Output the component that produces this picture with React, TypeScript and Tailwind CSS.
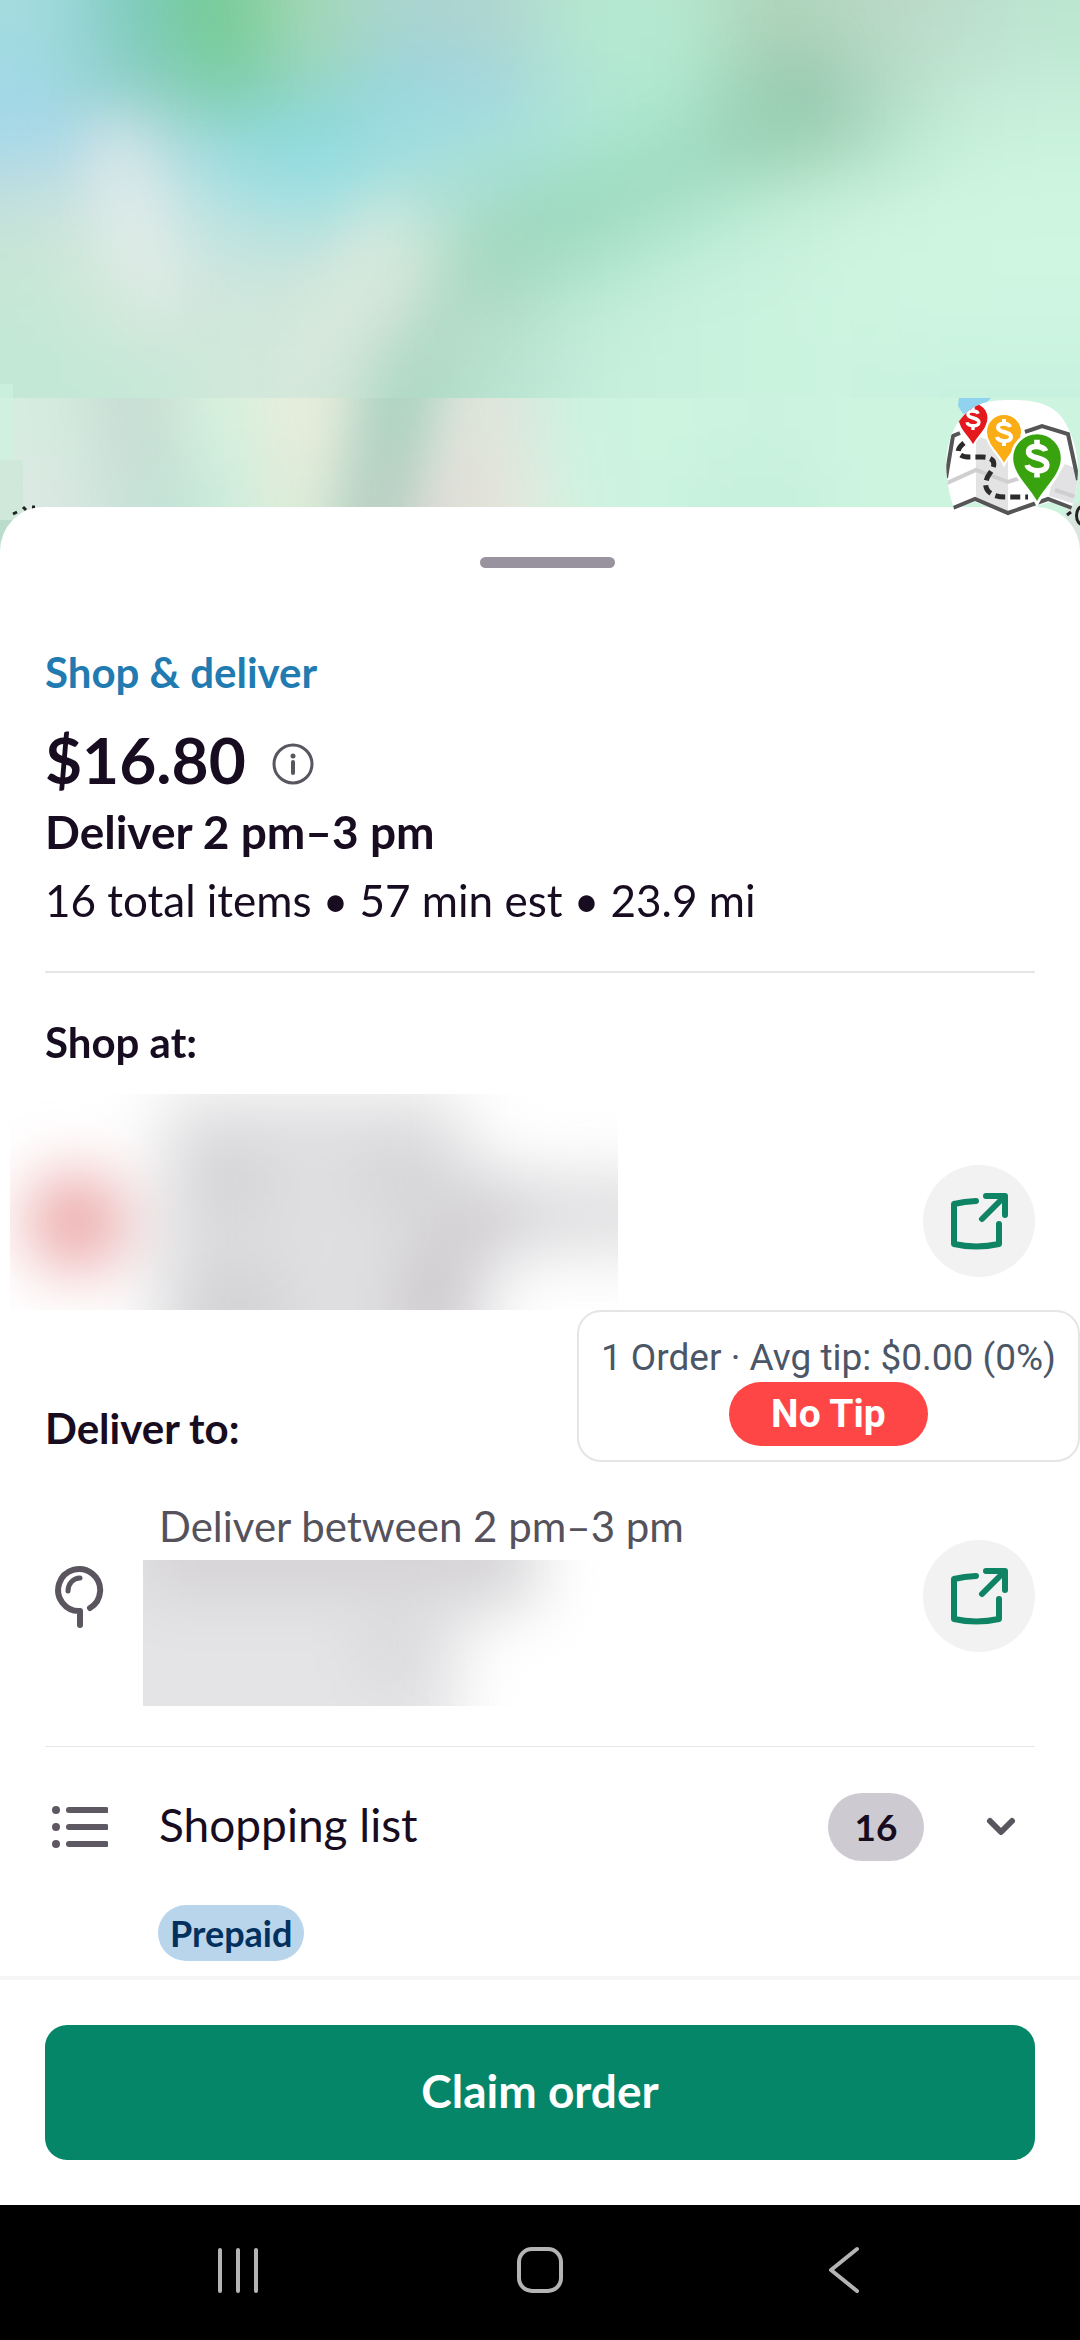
import { useState } from "react";

// Coarse colour samples of the map tiles, softened by a gaussian filter
const upperTiles = [
  ["#a4dbe0", "#7ccabb", "#7ccd98", "#a6d8b8", "#a9d4d2", "#b0d4cf", "#b5e8d0", "#b6e9d0", "#add4ba", "#b7d7c2", "#bddccb", "#bce6d0"],
  ["#a0d8e6", "#8dcfc4", "#7cceae", "#96d6c4", "#98d6e2", "#a2d6de", "#b2e6d5", "#b0ead0", "#9dcdb2", "#a8d2bc", "#c0e7d2", "#c4ecd8"],
  ["#a8d8ea", "#c6dfe8", "#95d9da", "#8adae4", "#a0dde0", "#a8e0dc", "#ace6d2", "#a6e2c8", "#98ceb0", "#a8d9be", "#c6f0da", "#caf3dd"],
  ["#c5e0dc", "#dfebea", "#aee0e2", "#a0e0e2", "#b4e3da", "#a6decc", "#9fdcc3", "#a6e2c8", "#bcead2", "#caf1dc", "#cdf4df", "#cdf5df"],
  ["#c8e6d6", "#deece4", "#c8e4de", "#c8e4dc", "#daeade", "#a4d8c0", "#a8e0c8", "#bfecd6", "#c8f1dc", "#cdf4df", "#cff6e0", "#cff6e0"],
  ["#c5e8d6", "#d4e9dc", "#d0e6dc", "#d2e8dc", "#d2e4d6", "#b0dac6", "#c0ecd8", "#c8f1dd", "#caf3de", "#ccf4df", "#cef5e0", "#cef5e1"],
  ["#c3e8d6", "#c6e8d8", "#cfe8da", "#d8e9dc", "#b6dac8", "#b8e3d0", "#c4eddb", "#c8f1dd", "#caf3de", "#cbf3df", "#c8f2e0", "#c8f2e0"],
];

const lowerTiles = [
  ["#d6ece0", "#cbdfd6", "#d6f2de", "#e8ecdc", "#b0d8c6", "#dfe6dc", "#ccf3e0", "#ccf4df", "#caf2df", "#cdf4df", "#cdf4df", "#cdf4df"],
  ["#dce9e3", "#c8e2d8", "#cdeedd", "#dcebd8", "#bccfc7", "#e8e5dc", "#cff3e0", "#caf3df", "#c6f0dc", "#ccf4df", "#ccf4df", "#cdf4df"],
];

interface TilesProps {
  rows: string[][];
  top: number;
  cellHeight: number;
  filter: string;
}

function Tiles({ rows, top, cellHeight, filter }: TilesProps) {
  // One extra cell on every side keeps the blur from fading at the edges
  const padded = [rows[0], ...rows, rows[rows.length - 1]].map((row) => [
    row[0],
    ...row,
    row[row.length - 1],
  ]);

  return (
    <g filter={filter}>
      {padded.map((row, r) =>
        row.map((fill, c) => {
          const firstRow = r === 0;
          const lastRow = r === padded.length - 1;
          return (
            <rect
              key={`${r}-${c}`}
              x={c === 0 ? -240 : (c - 1) * 90}
              y={firstRow ? top - 200 : top + (r - 1) * cellHeight}
              width={c === 0 || c === row.length - 1 ? 241 : 91}
              height={firstRow || lastRow ? 201 : cellHeight + 1}
              fill={fill}
            />
          );
        }),
      )}
    </g>
  );
}

function MapBackdrop() {
  return (
    <svg
      className="block h-[552px] w-full"
      viewBox="0 0 1080 552"
      preserveAspectRatio="xMidYMin slice"
      aria-hidden="true"
    >
      <defs>
        <filter id="soften" x="0" y="0" width="1" height="1" colorInterpolationFilters="sRGB">
          <feGaussianBlur stdDeviation="42 34" />
        </filter>
        <filter id="soften-strip" x="0" y="0" width="1" height="1" colorInterpolationFilters="sRGB">
          <feGaussianBlur stdDeviation="36 30" />
        </filter>
        <filter id="soften-road" x="-0.5" y="-0.5" width="2" height="2" colorInterpolationFilters="sRGB">
          <feGaussianBlur stdDeviation="26" />
        </filter>
        <clipPath id="upper">
          <rect width="1080" height="398" />
        </clipPath>
        <clipPath id="lower">
          <rect y="398" width="1080" height="154" />
        </clipPath>
      </defs>
      <g clipPath="url(#upper)">
        <Tiles rows={upperTiles} top={0} cellHeight={57} filter="url(#soften)" />
        <g filter="url(#soften-road)" fill="none" strokeLinecap="round">
          <path d="M810 100L650 180L510 235L450 300L400 420" stroke="#95d3b6" strokeWidth="40" opacity="0.4" />
          <path d="M115 140L130 220L160 300" stroke="#e6eceb" strokeWidth="40" opacity="0.6" />
          <path d="M385 215L350 290L310 360" stroke="#e6efe2" strokeWidth="36" opacity="0.5" />
          <path d="M210 -10L220 60" stroke="#6cca8c" strokeWidth="50" opacity="0.3" />
          <path d="M800 60L808 100" stroke="#8fbfa6" strokeWidth="50" opacity="0.3" />
        </g>
      </g>
      <g clipPath="url(#lower)">
        <Tiles rows={lowerTiles} top={398} cellHeight={60} filter="url(#soften-strip)" />
        <g filter="url(#soften-road)" fill="none">
          <path d="M410 340L355 560" stroke="#a4c8b8" strokeWidth="36" opacity="0.7" />
          <path d="M110 340L150 440L190 560" stroke="#b6d8cc" strokeWidth="30" opacity="0.4" />
          <path d="M305 340L270 560" stroke="#ecefdc" strokeWidth="30" opacity="0.6" />
          <path d="M480 380L430 560" stroke="#efe6de" strokeWidth="40" opacity="0.7" />
        </g>
      </g>
      <path d="M0 384h13v76H0z" fill="#cdf3e0" opacity="0.7" />
      <path d="M0 460h23v60H0z" fill="#cfe8da" />
      <path d="M0 520h12v32H0z" fill="#b9dccb" />
      <path d="M959 398h32l-8 8-20 8-5-8z" fill="#8fd3ee" />
      <path d="M13 514l4-2M23 507l3 3M32 507h3" stroke="#222" strokeWidth="3" />
      <path d="M1064 512l16-12v52z" fill="#d9e6de" />
      <path d="M1084 506c-10 0-10 19 0 19" fill="none" stroke="#222" strokeWidth="3" />
      <path d="M1067 515l4-3" stroke="#222" strokeWidth="3" />
    </svg>
  );
}

function Pin({ x, y, size, fill }: { x: number; y: number; size: number; fill: string }) {
  return (
    <g transform={`translate(${x} ${y}) scale(${size})`}>
      <path
        d="M0 33C-5 22-18 13-18 0a18 18 0 0 1 36 0C18 13 5 22 0 33z"
        fill={fill}
        stroke="#fff"
        strokeWidth="2"
      />
      <path
        d="M6-5C5-9-6-10-6-4.500C-6 1 7-1 7 5C7 11-6 10-7 5M0-8v-5M0 9v5"
        fill="none"
        stroke="#fff"
        strokeWidth="4"
      />
    </g>
  );
}

function TipMapLogo() {
  return (
    <svg className="h-[120px] w-[135px]" viewBox="0 0 135 120" aria-hidden="true">
      <defs>
        <clipPath id="logo-shape">
          <path d="M10 112C-2 76-2 46 12 24C26 4 40 0 66 0C96 0 114 6 124 30C135 54 136 78 126 110L100 120H20z" />
        </clipPath>
      </defs>
      <g clipPath="url(#logo-shape)">
        <path d="M0 0h135v108l-30-6-42 12-33-12-30 8z" fill="#fff" />
        <path d="M31 36l32 10v66l-32-12z" fill="#e3e3e3" />
        <path d="M106 86l14-22 16 6v36l-32-10z" fill="#e2e2e4" />
        <path d="M0 84l31-14 32 12 12-4M110 90l24 8" fill="none" stroke="#cfcfd2" strokeWidth="4" />
        <path
          d="M1 78L8 36l7-3M80 32l17-6 26 8 10 46M8 108l22-9 33 14 40-14 24 9"
          fill="none"
          stroke="#555"
          strokeWidth="4"
        />
      </g>
      <path
        d="M19 43c-12 10-3 14 6 14h12c14 0 14 8 8 16-10 14-2 24 16 24h22"
        fill="none"
        stroke="#2b2b2b"
        strokeWidth="5"
        strokeDasharray="10 5"
      />
      <g clipPath="url(#logo-shape)">
        <Pin x={28} y={18} size={0.85} fill="#e3191d" />
      </g>
      <Pin x={59} y={32} size={1} fill="#faad14" />
      <Pin x={92} y={58} size={1.4} fill="#38a30f" />
    </svg>
  );
}

function OpenIcon() {
  return (
    <svg
      className="size-[58px]"
      viewBox="0 0 58 58"
      fill="none"
      stroke="currentColor"
      strokeWidth="6"
      strokeLinecap="round"
      strokeLinejoin="round"
      aria-hidden="true"
    >
      <path d="M26 9Q14 9.500 4 12V52Q26 57 49 52V32" />
      <path d="M36 4h19v19M54 5L32 27" />
    </svg>
  );
}

function OpenButton({ label }: { label: string }) {
  return (
    <button
      type="button"
      aria-label={label}
      className="flex size-28 shrink-0 items-center justify-center rounded-full bg-[#f2f2f2] text-[#0f8465]"
    >
      <OpenIcon />
    </button>
  );
}

function StorePreview() {
  return (
    <svg className="h-[216px] w-[608px]" viewBox="0 0 608 216" role="img" aria-label="Store">
      <defs>
        <filter id="haze" x="-0.5" y="-0.5" width="2" height="2" colorInterpolationFilters="sRGB">
          <feGaussianBlur stdDeviation="32" />
        </filter>
      </defs>
      <g filter="url(#haze)">
        <path d="M155 0h295v50l60 30h160v80H490l-30 160H135z" fill="#dfdfe1" />
        <path d="M180 60h80v60h-80zM350 60h80v50h-80zM180 170h90v110h-90z" fill="#d2d2d5" />
        <path d="M390 160h70v90h-70zM420 110h100v40h-100z" fill="#ccc8cc" />
        <circle cx="66" cy="128" r="50" fill="#eba6a6" />
      </g>
    </svg>
  );
}

function AddressPreview() {
  return (
    <svg className="-ml-4 h-[146px] w-[457px]" viewBox="0 0 457 146" role="img" aria-label="Address">
      <defs>
        <filter id="mist" x="-0.5" y="-0.5" width="2" height="2" colorInterpolationFilters="sRGB">
          <feGaussianBlur stdDeviation="30" />
        </filter>
      </defs>
      <g filter="url(#mist)">
        <path d="M-120 -100h520V50h-60l-24 50v200H-120z" fill="#e4e4e6" />
        <path d="M0 -60h380v100H0z" fill="#d6d4d6" />
        <path d="M220 60h60v60h-60z" fill="#d8d7da" />
      </g>
    </svg>
  );
}

export default function App() {
  const [showList, setShowList] = useState<boolean>(false);

  return (
    <div className="flex min-h-screen flex-col bg-white font-['Lato',sans-serif] text-[#170c20]">
      <MapBackdrop />

      <main className="relative -mt-[45px] flex grow flex-col rounded-t-[44px] bg-white">
        <div className="absolute -top-[107px] right-0">
          <TipMapLogo />
        </div>

        <div className="flex justify-center pt-[50px] pl-[14px]">
          <div className="h-[11px] w-[135px] rounded-full bg-[#98939f]" />
        </div>

        <section className="mx-[45px] border-b-2 border-[#e6e6e8] pt-[78px] pb-[43px]">
          <p className="text-[42px] leading-[52px] font-bold text-[#227bb0]">Shop &amp; deliver</p>
          <div className="mt-[22px] flex items-center gap-[26px]">
            <h1 className="text-[64px] leading-[80px] font-bold">$16.80</h1>
            <button type="button" aria-label="Earnings details" className="pt-2 text-[#5a565f]">
              <svg className="size-[42px]" viewBox="0 0 42 42" fill="none" stroke="currentColor" aria-hidden="true">
                <circle cx="21" cy="21" r="19" strokeWidth="3" />
                <path d="M21 19v11" strokeWidth="4" strokeLinecap="round" />
                <circle cx="21" cy="13" r="2.500" fill="currentColor" stroke="none" />
              </svg>
            </button>
          </div>
          <p className="mt-1 text-[46px] leading-[56px] font-bold">Deliver 2 pm–3 pm</p>
          <p className="mt-3 text-[44px] leading-[56px]">16 total items • 57 min est • 23.9 mi</p>
        </section>

        <section className="mx-[45px] pt-[43px]">
          <h2 className="text-[42px] leading-[52px] font-bold">Shop at:</h2>
          <div className="mt-[26px] -ml-[35px] flex items-end justify-between">
            <StorePreview />
            <div className="pb-[33px]">
              <OpenButton label="Open store in maps" />
            </div>
          </div>
        </section>

        <section className="relative mx-[45px] border-b border-[#e6e6e8] pt-[92px] pb-10">
          <h2 className="text-[42px] leading-[52px] font-bold">Deliver to:</h2>

          <aside className="absolute top-0 -right-[45px] flex flex-col items-center rounded-[24px] border-2 border-[#e5e5e7] bg-white px-[22px] pt-[22px] pb-[14px] font-['Roboto',sans-serif]">
            <p className="text-[37px] leading-[48px] whitespace-nowrap text-[#4b5666]">
              1 Order · Avg tip: $0.00 (0%)
            </p>
            <span className="rounded-full bg-[#ff4646] px-[42px] text-[39px] leading-[64px] font-bold text-white">
              No Tip
            </span>
          </aside>

          <div className="mt-[46px] flex items-center">
            <div className="w-[114px] pb-[14px] pl-2">
              <svg
                className="h-[64px] w-[52px] text-[#5a555f]"
                viewBox="0 0 52 64"
                fill="none"
                stroke="currentColor"
                strokeWidth="6"
                strokeLinecap="round"
                strokeLinejoin="round"
                aria-hidden="true"
              >
                <path d="M37 44A21 21 0 1 0 27 47v14" />
                <path d="M15 27c0-7 5-13 12-13" strokeWidth="5" />
              </svg>
            </div>
            <div className="grow">
              <p className="text-[42px] leading-[52px] text-[#56525c]">Deliver between 2 pm–3 pm</p>
              <div className="mt-2">
                <AddressPreview />
              </div>
            </div>
            <div className="pb-[14px]">
              <OpenButton label="Open address in maps" />
            </div>
          </div>
        </section>

        <section className="mx-[45px] pt-[46px] pb-[14px]">
          <button
            type="button"
            aria-expanded={showList}
            onClick={() => setShowList(!showList)}
            className="flex w-full items-center text-left"
          >
            <svg
              className="mr-[51px] ml-[7px] h-[44px] w-[56px] text-[#5e5863]"
              viewBox="0 0 56 44"
              fill="none"
              stroke="currentColor"
              strokeWidth="6"
              strokeLinecap="round"
              aria-hidden="true"
            >
              <path d="M17 5h37M17 22h37M17 39h37" />
              <path d="M4 5h.01M4 22h.01M4 39h.01" strokeWidth="8" />
            </svg>
            <span className="grow pb-1 text-[46px] leading-[56px]">Shopping list</span>
            <span className="w-24 rounded-full bg-[#cdcad1] text-center text-[37px] leading-[68px] font-bold">
              16
            </span>
            <svg
              className="mr-[17px] ml-[60px] h-[24px] w-[34px] text-[#5a565f]"
              viewBox="0 0 34 24"
              fill="none"
              stroke="currentColor"
              strokeWidth="6"
              strokeLinecap="round"
              strokeLinejoin="round"
              aria-hidden="true"
            >
              <path d="M6 6l11 11L28 6" />
            </svg>
          </button>
          <div className="mt-11 pl-[113px]">
            <span className="inline-block rounded-full bg-[#b8d5ec] px-3 align-top text-[36px] leading-[56px] font-bold text-[#03305c]">
              Prepaid
            </span>
          </div>
        </section>
      </main>

      <footer className="border-t-4 border-[#f6f6f6] px-[45px] pt-[45px] pb-[45px]">
        <button
          type="button"
          className="block h-[135px] w-full rounded-[22px] bg-[#058668] pb-1 text-[46px] font-bold text-white"
        >
          Claim order
        </button>
      </footer>

      <nav className="grid h-[135px] grid-cols-3 items-center bg-black px-[87px] pb-[6px] text-[#b4b4b4]">
        <button type="button" aria-label="Recent apps" className="flex justify-center">
          <svg className="h-[48px] w-[48px]" viewBox="0 0 48 48" stroke="currentColor" strokeWidth="4" strokeLinecap="round" aria-hidden="true">
            <path d="M6 4v41M24 4v41M42 4v41" />
          </svg>
        </button>
        <button type="button" aria-label="Home" className="flex justify-center">
          <svg
            className="h-[48px] w-[48px]"
            viewBox="0 0 48 48"
            fill="none"
            stroke="currentColor"
            strokeWidth="4"
            aria-hidden="true"
          >
            <rect x="3" y="3" width="42" height="42" rx="13" />
          </svg>
        </button>
        <button type="button" aria-label="Back" className="flex justify-center">
          <svg
            className="h-[48px] w-[48px]"
            viewBox="0 0 48 48"
            fill="none"
            stroke="currentColor"
            strokeWidth="4"
            strokeLinecap="round"
            strokeLinejoin="round"
            aria-hidden="true"
          >
            <path d="M39 3L13 24l26 21" />
          </svg>
        </button>
      </nav>
    </div>
  );
}
